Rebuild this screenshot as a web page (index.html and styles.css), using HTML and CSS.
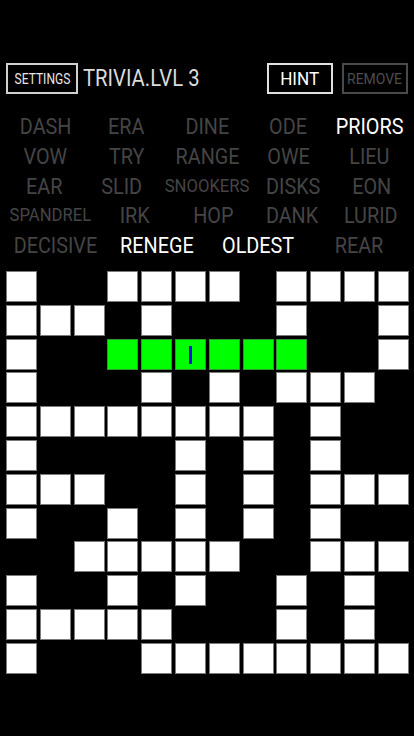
FILE: index.html
```html
<!DOCTYPE html>
<html>
<head>
<meta charset="utf-8">
<link rel="stylesheet" href="styles.css">
</head>
<body>
<div class="app">
  <header class="bar">
    <button class="btn settings"><span class="cond">SETTINGS</span></button>
    <div class="title"><span class="cond">TRIVIA.LVL 3</span></div>
    <button class="btn hint"><span class="cond">HINT</span></button>
    <button class="btn remove"><span class="cond">REMOVE</span></button>
  </header>

  <section class="words">
    <div class="wrow">
      <div class="word"><span class="cond">DASH</span></div>
      <div class="word"><span class="cond">ERA</span></div>
      <div class="word"><span class="cond">DINE</span></div>
      <div class="word"><span class="cond">ODE</span></div>
      <div class="word done"><span class="cond">PRIORS</span></div>
    </div>
    <div class="wrow">
      <div class="word"><span class="cond">VOW</span></div>
      <div class="word"><span class="cond">TRY</span></div>
      <div class="word"><span class="cond">RANGE</span></div>
      <div class="word"><span class="cond">OWE</span></div>
      <div class="word"><span class="cond">LIEU</span></div>
    </div>
    <div class="wrow">
      <div class="word"><span class="cond">EAR</span></div>
      <div class="word"><span class="cond">SLID</span></div>
      <div class="word small"><span class="cond">SNOOKERS</span></div>
      <div class="word"><span class="cond">DISKS</span></div>
      <div class="word"><span class="cond">EON</span></div>
    </div>
    <div class="wrow">
      <div class="word small"><span class="cond">SPANDREL</span></div>
      <div class="word"><span class="cond">IRK</span></div>
      <div class="word"><span class="cond">HOP</span></div>
      <div class="word"><span class="cond">DANK</span></div>
      <div class="word"><span class="cond">LURID</span></div>
    </div>
    <div class="wrow">
      <div class="word"><span class="cond">DECISIVE</span></div>
      <div class="word done"><span class="cond">RENEGE</span></div>
      <div class="word done"><span class="cond">OLDEST</span></div>
      <div class="word"><span class="cond">REAR</span></div>
    </div>
  </section>

  <section class="grid">
    <div class="w"></div><div class="e"></div><div class="e"></div><div class="w"></div><div class="w"></div><div class="w"></div><div class="w"></div><div class="e"></div><div class="w"></div><div class="w"></div><div class="w"></div><div class="w"></div>
    <div class="w"></div><div class="w"></div><div class="w"></div><div class="e"></div><div class="w"></div><div class="e"></div><div class="e"></div><div class="e"></div><div class="w"></div><div class="e"></div><div class="e"></div><div class="w"></div>
    <div class="w"></div><div class="e"></div><div class="e"></div><div class="g"></div><div class="g"></div><div class="g"><span class="caret"></span></div><div class="g"></div><div class="g"></div><div class="g"></div><div class="e"></div><div class="e"></div><div class="w"></div>
    <div class="w"></div><div class="e"></div><div class="e"></div><div class="e"></div><div class="w"></div><div class="e"></div><div class="w"></div><div class="e"></div><div class="w"></div><div class="w"></div><div class="w"></div><div class="e"></div>
    <div class="w"></div><div class="w"></div><div class="w"></div><div class="w"></div><div class="w"></div><div class="w"></div><div class="w"></div><div class="w"></div><div class="e"></div><div class="w"></div><div class="e"></div><div class="e"></div>
    <div class="w"></div><div class="e"></div><div class="e"></div><div class="e"></div><div class="e"></div><div class="w"></div><div class="e"></div><div class="w"></div><div class="e"></div><div class="w"></div><div class="e"></div><div class="e"></div>
    <div class="w"></div><div class="w"></div><div class="w"></div><div class="e"></div><div class="e"></div><div class="w"></div><div class="e"></div><div class="w"></div><div class="e"></div><div class="w"></div><div class="w"></div><div class="w"></div>
    <div class="w"></div><div class="e"></div><div class="e"></div><div class="w"></div><div class="e"></div><div class="w"></div><div class="e"></div><div class="w"></div><div class="e"></div><div class="w"></div><div class="e"></div><div class="e"></div>
    <div class="e"></div><div class="e"></div><div class="w"></div><div class="w"></div><div class="w"></div><div class="w"></div><div class="w"></div><div class="e"></div><div class="e"></div><div class="w"></div><div class="w"></div><div class="w"></div>
    <div class="w"></div><div class="e"></div><div class="e"></div><div class="w"></div><div class="e"></div><div class="w"></div><div class="e"></div><div class="e"></div><div class="w"></div><div class="e"></div><div class="w"></div><div class="e"></div>
    <div class="w"></div><div class="w"></div><div class="w"></div><div class="w"></div><div class="w"></div><div class="e"></div><div class="e"></div><div class="e"></div><div class="w"></div><div class="e"></div><div class="w"></div><div class="e"></div>
    <div class="w"></div><div class="e"></div><div class="e"></div><div class="e"></div><div class="w"></div><div class="w"></div><div class="w"></div><div class="w"></div><div class="w"></div><div class="w"></div><div class="w"></div><div class="w"></div>
  </section>
</div>
</body>
</html>
```

FILE: styles.css
```css
html, body {
  margin: 0;
  padding: 0;
  background: #000;
  height: 100%;
}
body {
  font-family: Roboto, "Noto Sans", sans-serif;
  color: #fff;
  overflow: hidden;
}
.app {
  width: 414px;
  height: 736px;
  background: #000;
}
.cond {
  display: inline-block;
  transform: scaleX(0.9);
  transform-origin: center;
  white-space: nowrap;
}
.bar {
  display: flex;
  align-items: center;
  padding: 63px 6px 0 6px;
  height: 31px;
}
.btn {
  box-sizing: border-box;
  height: 31px;
  background: #000;
  border: 2px solid #d0d0d0;
  padding: 0;
  margin: 0;
  font-family: Roboto, sans-serif;
  display: flex;
  align-items: center;
  justify-content: center;
  overflow: visible;
}
.settings {
  width: 72px;
  color: #e6e6e6;
  font-size: 14px;
}
.settings .cond {
  transform: scaleX(0.86);
}
.title {
  margin-left: 5px;
  font-size: 23px;
  color: #dcdcdc;
  flex: 1;
  line-height: 31px;
}
.title .cond {
  transform-origin: left center;
  transform: scaleX(0.88);
}
.hint {
  width: 66px;
  color: #fff;
  border-color: #e0e0e0;
  font-size: 19px;
}
.remove {
  width: 66px;
  margin-left: 9px;
  color: #4d4d4d;
  border-color: #4a4a4a;
  font-size: 15.5px;
}
.words {
  margin-top: 18px;
  padding: 0 4px 0 5px;
}
.wrow {
  display: flex;
  height: 29.8px;
  align-items: center;
}
.word {
  flex: 1;
  text-align: center;
  font-size: 22px;
  color: #454545;
  line-height: 29.8px;
}
.word.small {
  font-size: 18.5px;
}
.word.done {
  color: #fff;
}
.grid {
  margin: 10px 0 0 6px;
  width: 402.7px;
  display: grid;
  grid-template-columns: repeat(12, 1fr);
  grid-auto-rows: 31px;
  gap: 2.8px 2.8px;
}
.grid > div {
  box-sizing: border-box;
  position: relative;
}
.w {
  background: #fff;
  border: 1px solid #7a7a7a;
}
.g {
  background: #00ff00;
  border: 1px solid #2f9a2f;
}
.caret {
  position: absolute;
  left: 13px;
  top: 6px;
  width: 3px;
  height: 18px;
  background: #1010e8;
}
```
